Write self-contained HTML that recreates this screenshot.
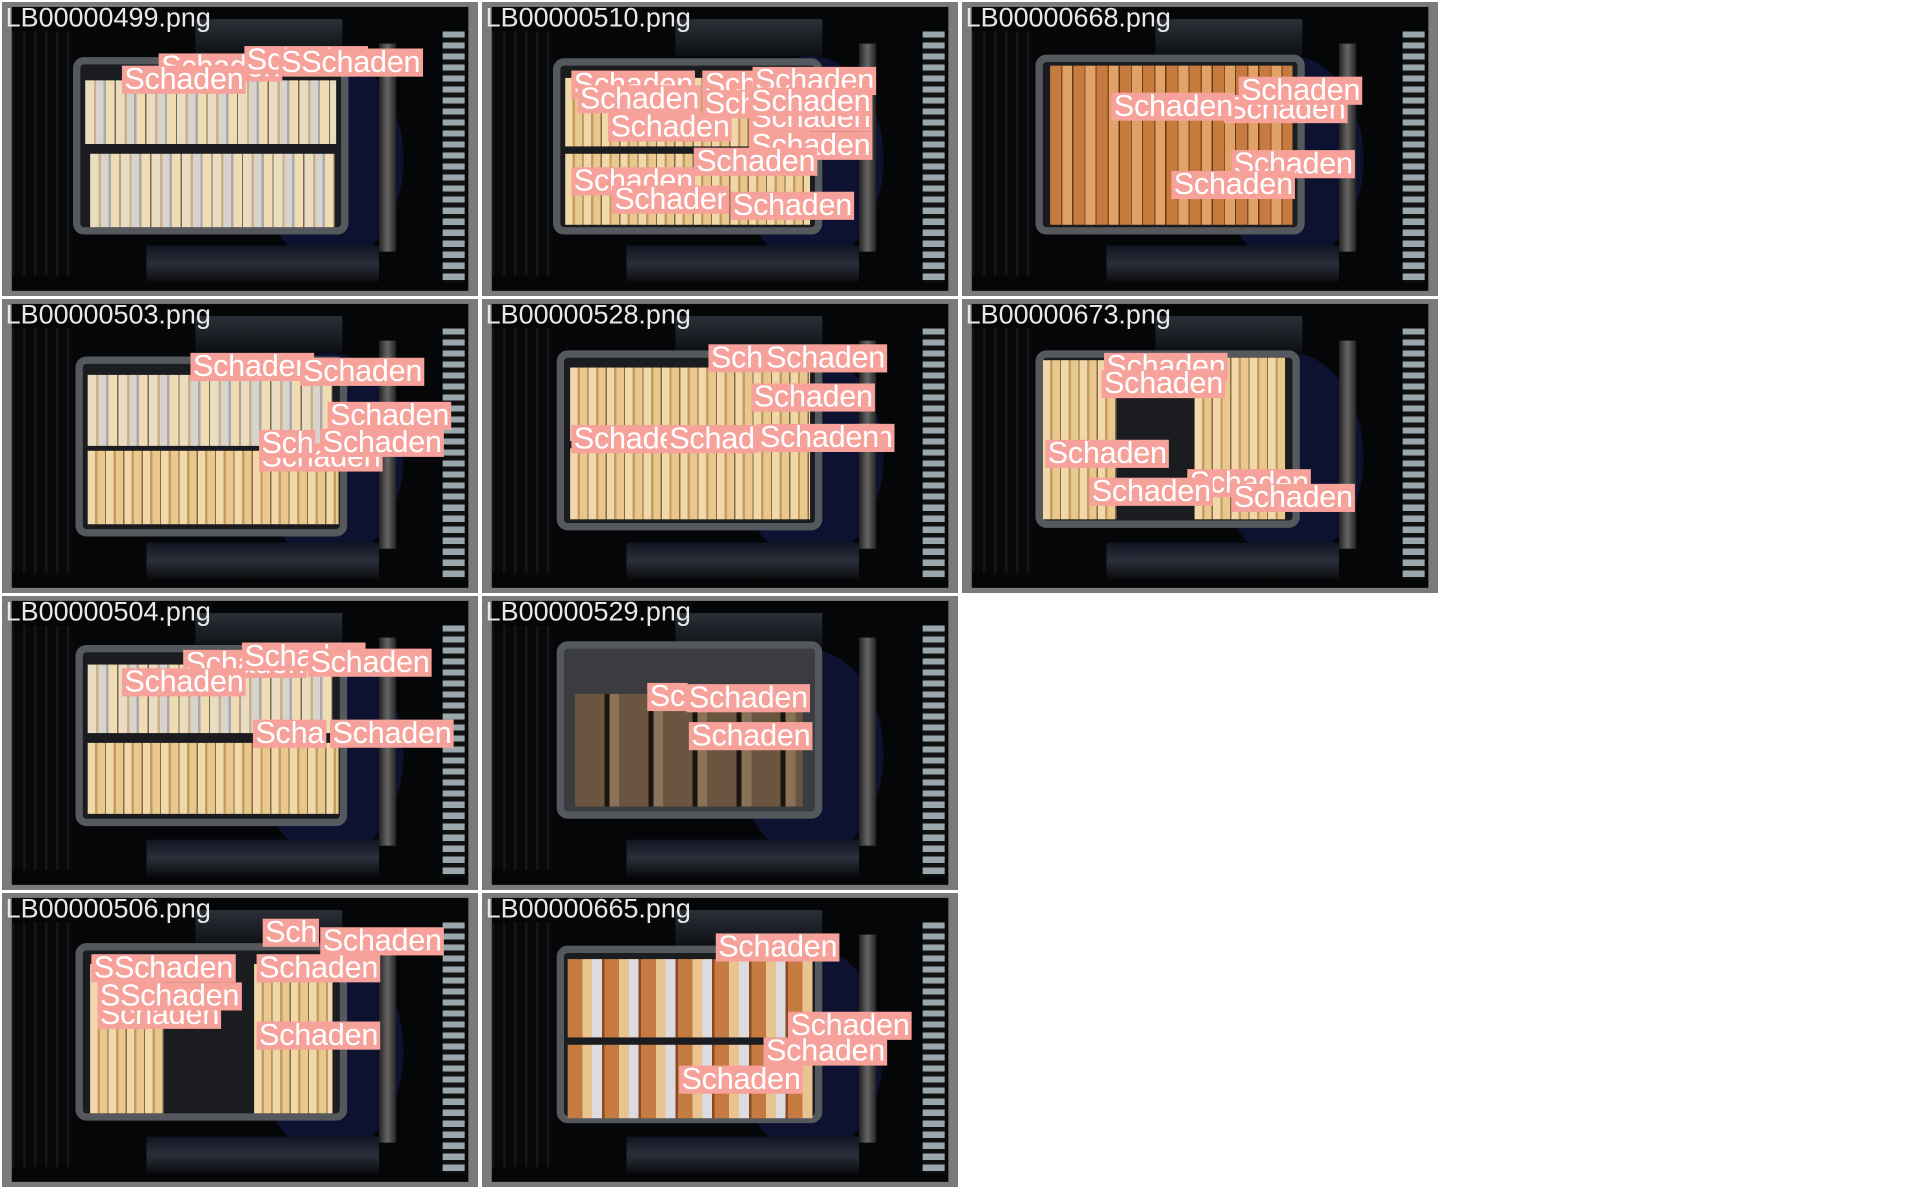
<!DOCTYPE html>
<html><head><meta charset="utf-8"><style>
html,body{margin:0;padding:0;background:#fff;width:1920px;height:1192px;overflow:hidden;font-family:"Liberation Sans",Arial,sans-serif}
.t{position:absolute;width:476px;height:294px;background:#7a7a7a;overflow:hidden}
.s{position:absolute;left:0;top:0;width:389px;height:240px;transform:scale(1.224);transform-origin:0 0}
.in{position:absolute;left:8px;top:4px;right:8px;bottom:4px;background:#050608;overflow:hidden}
.grid{position:absolute;left:0;top:20px;width:50px;height:200px;background:repeating-linear-gradient(90deg,#14161a 0 2px,#07080a 2px 9px)}
.mech{position:absolute;left:150px;top:10px;width:120px;height:30px;background:linear-gradient(#2b3038,#0d0f12)}
.mech2{position:absolute;left:110px;top:195px;width:190px;height:30px;background:linear-gradient(#111522,#2a2f3a 50%,#0a0b0d)}
.disc{position:absolute;left:200px;top:40px;width:120px;height:170px;border-radius:50%;background:#0d1230}
.col{position:absolute;left:300px;top:30px;width:14px;height:170px;background:linear-gradient(90deg,#222,#666 50%,#222)}
.sl{position:absolute;left:352px;top:20px;width:18px;height:205px;background:repeating-linear-gradient(#9aa7ad 0 5px,#111 5px 9px)}
.bin{position:absolute;border:6px solid #55585d;border-radius:9px;background:#1b1c1f;box-sizing:border-box}
.bk{position:absolute}
.lab{position:absolute;color:#fff;background:#f6a19a;font-size:25px;line-height:23px;height:23px;padding:0 2px;white-space:nowrap;letter-spacing:-0.2px}
.nm{position:absolute;left:3px;top:1px;color:#e8e8e8;font-size:22px;line-height:24px;white-space:nowrap}
.cream{background:repeating-linear-gradient(90deg,#e9dcc0 0 7px,#c9b08a 7px 9px,#d8d4cc 9px 15px,#a9a9ad 15px 17px,#f0dcb2 17px 24px,#7a6a55 24px 25px)}
.orange{background:repeating-linear-gradient(90deg,#c57a3e 0 9px,#8a4d22 9px 10px,#e0a266 10px 18px,#6a3a18 18px 19px)}
.beige{background:repeating-linear-gradient(90deg,#f0d8a8 0 6px,#c69c64 6px 8px,#e8c88c 8px 14px,#8a6a48 14px 15px)}
.brown{background:repeating-linear-gradient(90deg,#6a5640 0 24px,#1a150f 24px 28px,#8a7258 28px 36px)}
.mix{background:repeating-linear-gradient(90deg,#c47a40 0 12px,#e8c490 12px 20px,#dcdce0 20px 28px,#8a4a20 28px 30px)}
</style></head><body>

<div class="t" style="left:2px;top:2px"><div class="s">
<div class="in"><div class="grid"></div><div class="mech"></div><div class="disc"></div><div class="mech2"></div><div class="col"></div><div class="sl"></div></div>
<div class="bin" style="left:58px;top:45px;width:225px;height:145px"></div>
<div class="bk cream" style="left:68px;top:64px;width:205px;height:52px"></div>
<div class="bk cream" style="left:72px;top:124px;width:200px;height:60px"></div>
<div class="lab" style="left:128px;top:42px">Schaden</div>
<div class="lab" style="left:198px;top:36px">Schaden</div>
<div class="lab" style="left:98px;top:52px">Schaden</div>
<div class="lab" style="left:226px;top:38px">SSchaden</div>
<div class="nm">LB00000499.png</div></div></div>

<div class="t" style="left:482px;top:2px"><div class="s">
<div class="in"><div class="grid"></div><div class="mech"></div><div class="disc"></div><div class="mech2"></div><div class="col"></div><div class="sl"></div></div>
<div class="bin" style="left:58px;top:46px;width:220px;height:144px"></div>
<div class="bk beige" style="left:68px;top:62px;width:200px;height:56px"></div>
<div class="bk beige" style="left:68px;top:124px;width:200px;height:58px"></div>
<div class="lab" style="left:73px;top:56px">Schaden</div>
<div class="lab" style="left:180px;top:56px">Schaden</div>
<div class="lab" style="left:78px;top:68px">Schaden</div>
<div class="lab" style="left:180px;top:72px">Schaden</div>
<div class="lab" style="left:218px;top:83px">Schaden</div>
<div class="lab" style="left:221px;top:53px">Schaden</div>
<div class="lab" style="left:218px;top:70px">Schaden</div>
<div class="lab" style="left:103px;top:91px">Schaden</div>
<div class="lab" style="left:218px;top:106px">Schaden</div>
<div class="lab" style="left:173px;top:119px">Schaden</div>
<div class="lab" style="left:73px;top:135px">Schaden</div>
<div class="lab" style="left:106px;top:150px">Schader</div>
<div class="lab" style="left:203px;top:155px">Schaden</div>
<div class="nm">LB00000510.png</div></div></div>

<div class="t" style="left:962px;top:2px"><div class="s">
<div class="in"><div class="grid"></div><div class="mech"></div><div class="disc"></div><div class="mech2"></div><div class="col"></div><div class="sl"></div></div>
<div class="bin" style="left:60px;top:43px;width:220px;height:147px"></div>
<div class="bk orange" style="left:72px;top:52px;width:198px;height:130px"></div>
<div class="lab" style="left:214px;top:76px">Schaden</div>
<div class="lab" style="left:122px;top:74px">Schaden</div>
<div class="lab" style="left:226px;top:61px">Schaden</div>
<div class="lab" style="left:220px;top:121px">Schaden</div>
<div class="lab" style="left:171px;top:138px">Schaden</div>
<div class="nm">LB00000668.png</div></div></div>

<div class="t" style="left:2px;top:299px"><div class="s">
<div class="in"><div class="grid"></div><div class="mech"></div><div class="disc"></div><div class="mech2"></div><div class="col"></div><div class="sl"></div></div>
<div class="bin" style="left:60px;top:47px;width:222px;height:147px"></div>
<div class="bk cream" style="left:70px;top:62px;width:200px;height:58px"></div>
<div class="bk beige" style="left:70px;top:124px;width:205px;height:60px"></div>
<div class="lab" style="left:154px;top:44px">Schaden</div>
<div class="lab" style="left:244px;top:48px">Schaden</div>
<div class="lab" style="left:266px;top:84px">Schaden</div>
<div class="lab" style="left:210px;top:118px">Schaden</div>
<div class="lab" style="left:210px;top:107px">Sch</div>
<div class="lab" style="left:260px;top:106px">Schaden</div>
<div class="nm">LB00000503.png</div></div></div>

<div class="t" style="left:482px;top:299px"><div class="s">
<div class="in"><div class="grid"></div><div class="mech"></div><div class="disc"></div><div class="mech2"></div><div class="col"></div><div class="sl"></div></div>
<div class="bin" style="left:61px;top:42px;width:217px;height:147px"></div>
<div class="bk beige" style="left:72px;top:56px;width:196px;height:60px"></div>
<div class="bk beige" style="left:72px;top:122px;width:196px;height:58px"></div>
<div class="lab" style="left:185px;top:37px">Sch</div>
<div class="lab" style="left:230px;top:37px">Schaden</div>
<div class="lab" style="left:220px;top:69px">Schaden</div>
<div class="lab" style="left:73px;top:103px">Schade</div>
<div class="lab" style="left:306px;top:102px">en</div>
<div class="lab" style="left:151px;top:103px">Schad</div>
<div class="lab" style="left:225px;top:102px">Schaden</div>
<div class="nm">LB00000528.png</div></div></div>

<div class="t" style="left:962px;top:299px"><div class="s">
<div class="in"><div class="grid"></div><div class="mech"></div><div class="disc"></div><div class="mech2"></div><div class="col"></div><div class="sl"></div></div>
<div class="bin" style="left:60px;top:42px;width:216px;height:145px"></div>
<div class="bk beige" style="left:66px;top:50px;width:60px;height:130px"></div>
<div class="bk beige" style="left:190px;top:48px;width:74px;height:132px"></div>
<div class="lab" style="left:116px;top:44px">Schaden</div>
<div class="lab" style="left:114px;top:58px">Schaden</div>
<div class="lab" style="left:68px;top:115px">Schaden</div>
<div class="lab" style="left:184px;top:139px">Schaden</div>
<div class="lab" style="left:220px;top:151px">Schaden</div>
<div class="lab" style="left:104px;top:146px">Schaden</div>
<div class="nm">LB00000673.png</div></div></div>

<div class="t" style="left:2px;top:596px"><div class="s">
<div class="in"><div class="grid"></div><div class="mech"></div><div class="disc"></div><div class="mech2"></div><div class="col"></div><div class="sl"></div></div>
<div class="bin" style="left:60px;top:40px;width:222px;height:148px"></div>
<div class="bk cream" style="left:70px;top:56px;width:200px;height:56px"></div>
<div class="bk beige" style="left:70px;top:120px;width:205px;height:58px"></div>
<div class="lab" style="left:148px;top:44px">Schaden</div>
<div class="lab" style="left:196px;top:38px">Schaden</div>
<div class="lab" style="left:98px;top:59px">Schaden</div>
<div class="lab" style="left:250px;top:43px">Schaden</div>
<div class="lab" style="left:205px;top:101px">Scha</div>
<div class="lab" style="left:268px;top:101px">Schaden</div>
<div class="nm">LB00000504.png</div></div></div>

<div class="t" style="left:482px;top:596px"><div class="s">
<div class="in"><div class="grid"></div><div class="mech"></div><div class="disc"></div><div class="mech2"></div><div class="col"></div><div class="sl"></div></div>
<div class="bin" style="left:61px;top:37px;width:217px;height:145px;background:#3a3c40"></div>
<div class="bk brown" style="left:76px;top:80px;width:186px;height:92px"></div>
<div class="lab" style="left:135px;top:71px">Sc</div>
<div class="lab" style="left:167px;top:72px">Schaden</div>
<div class="lab" style="left:169px;top:103px">Schaden</div>
<div class="nm">LB00000529.png</div></div></div>

<div class="t" style="left:2px;top:893px"><div class="s">
<div class="in"><div class="grid"></div><div class="mech"></div><div class="disc"></div><div class="mech2"></div><div class="col"></div><div class="sl"></div></div>
<div class="bin" style="left:60px;top:41px;width:222px;height:145px"></div>
<div class="bk beige" style="left:72px;top:58px;width:60px;height:122px"></div>
<div class="bk beige" style="left:206px;top:58px;width:64px;height:122px"></div>
<div class="lab" style="left:213px;top:21px">Sch</div>
<div class="lab" style="left:260px;top:28px">Schaden</div>
<div class="lab" style="left:73px;top:50px">SSchaden</div>
<div class="lab" style="left:208px;top:50px">Schaden</div>
<div class="lab" style="left:78px;top:88px">Schaden</div>
<div class="lab" style="left:78px;top:73px">SSchaden</div>
<div class="lab" style="left:208px;top:105px">Schaden</div>
<div class="nm">LB00000506.png</div></div></div>

<div class="t" style="left:482px;top:893px"><div class="s">
<div class="in"><div class="grid"></div><div class="mech"></div><div class="disc"></div><div class="mech2"></div><div class="col"></div><div class="sl"></div></div>
<div class="bin" style="left:61px;top:43px;width:217px;height:145px"></div>
<div class="bk mix" style="left:70px;top:54px;width:200px;height:64px"></div>
<div class="bk mix" style="left:70px;top:124px;width:200px;height:60px"></div>
<div class="lab" style="left:191px;top:33px">Schaden</div>
<div class="lab" style="left:250px;top:97px">Schaden</div>
<div class="lab" style="left:230px;top:118px">Schaden</div>
<div class="lab" style="left:161px;top:141px">Schaden</div>
<div class="nm">LB00000665.png</div></div></div>

</body></html>
